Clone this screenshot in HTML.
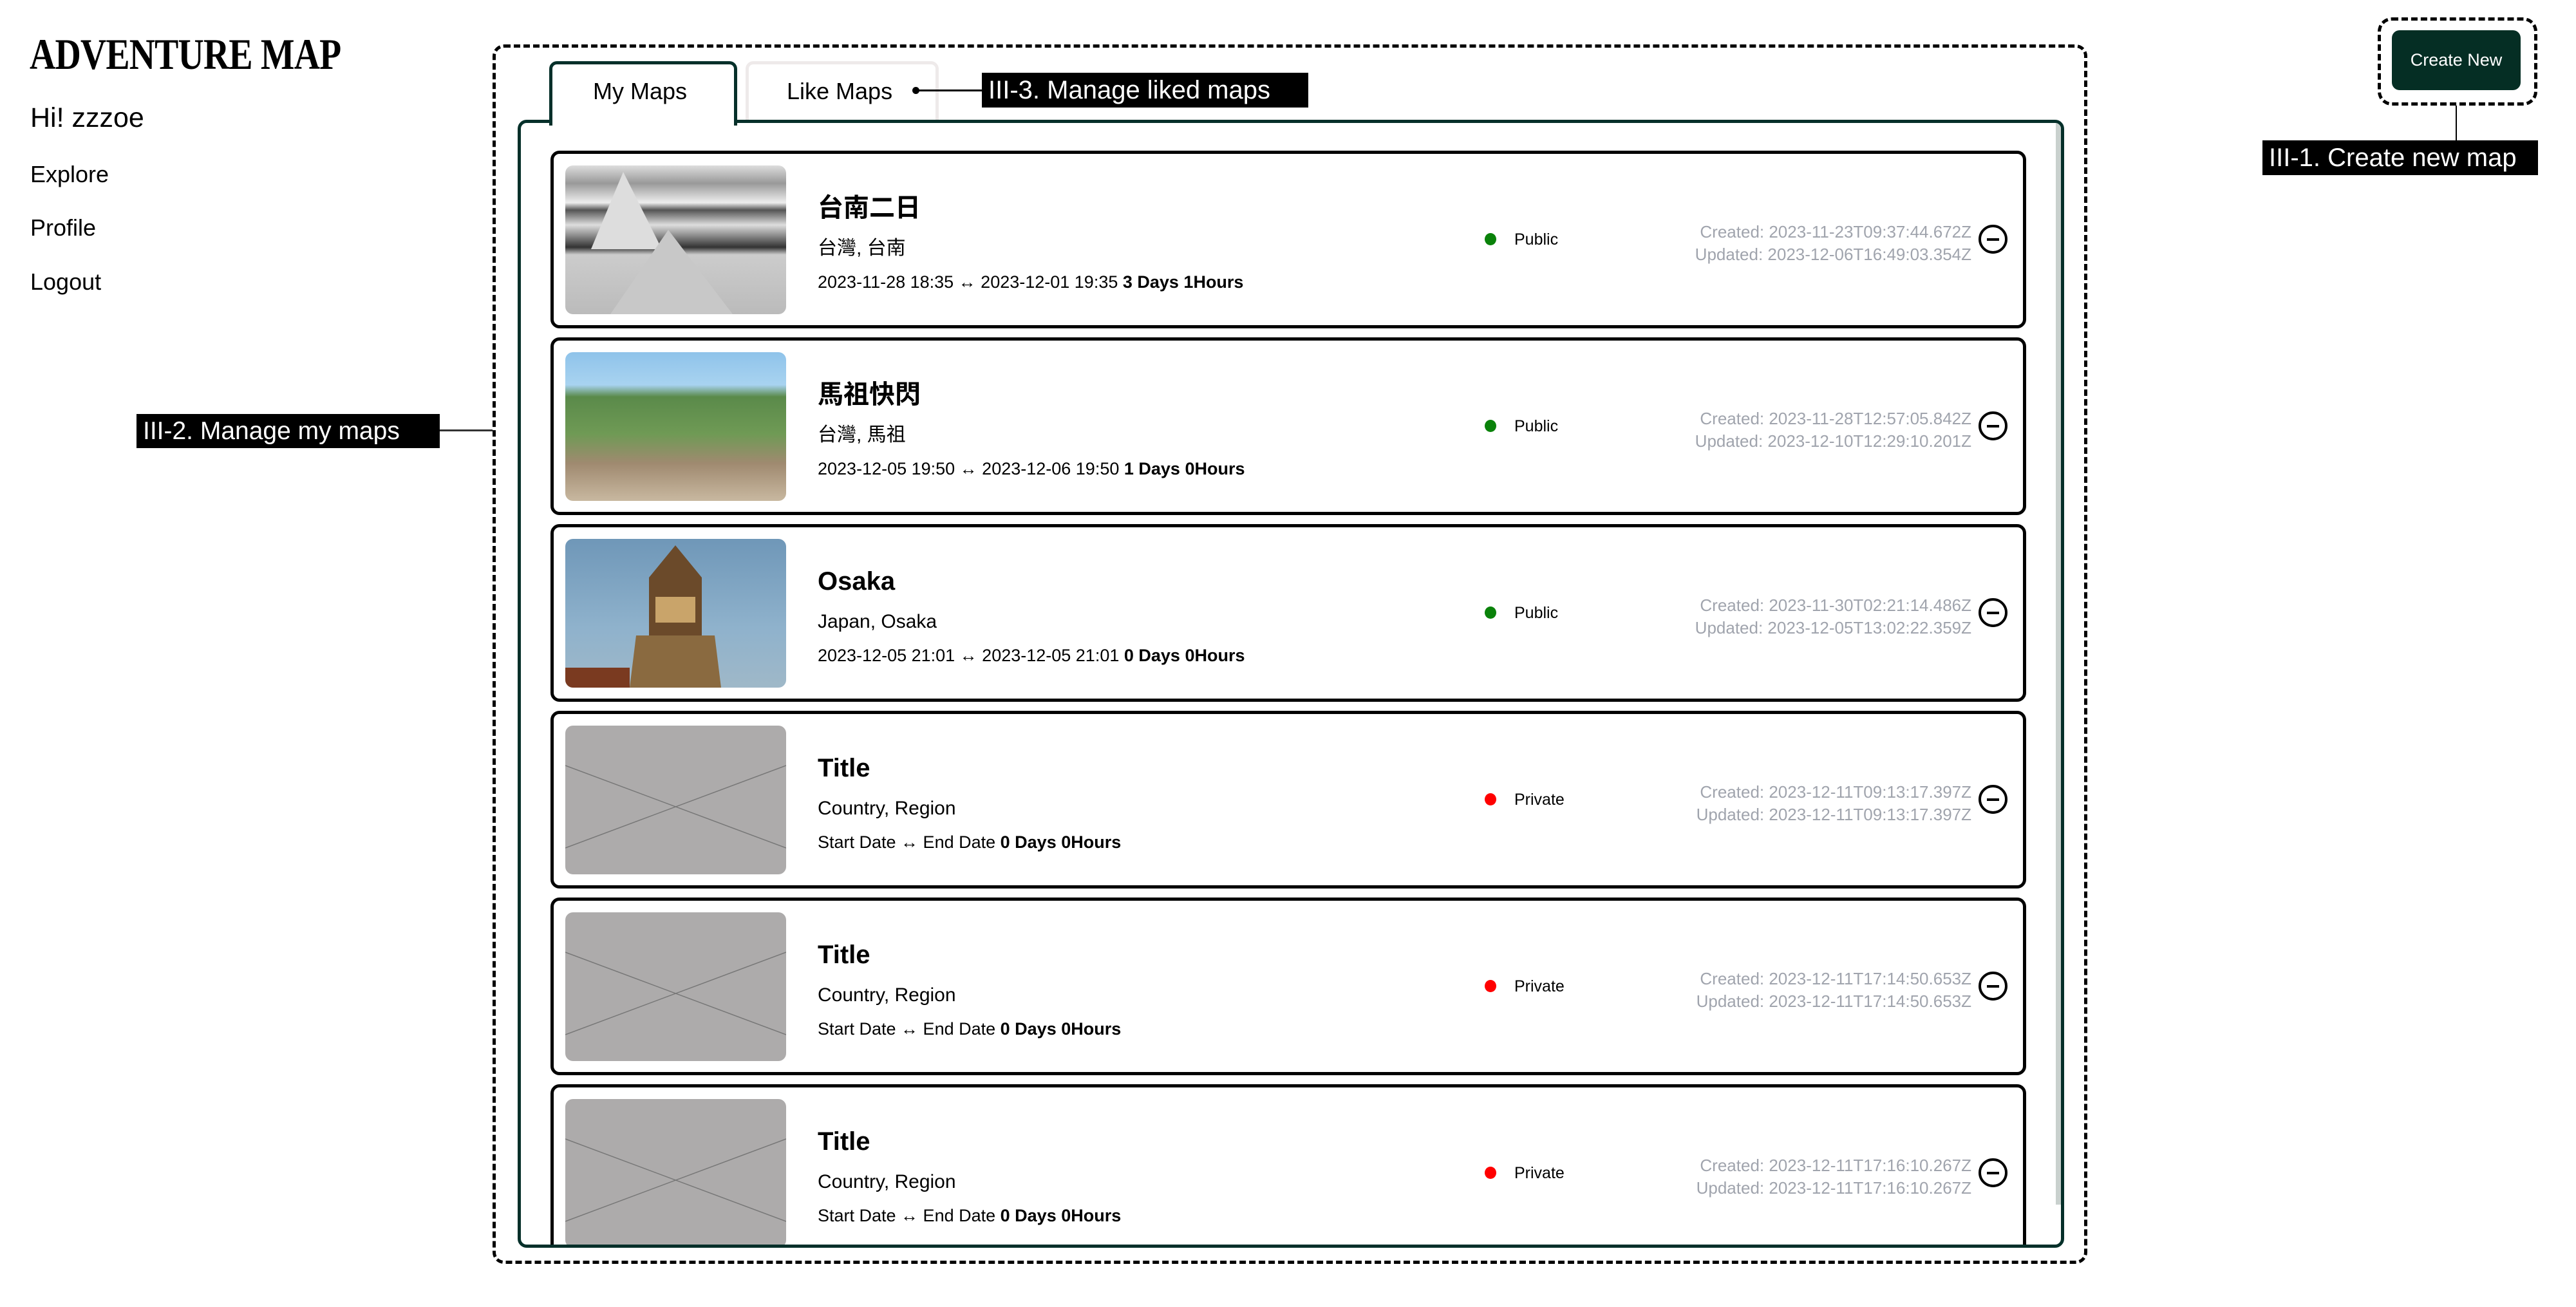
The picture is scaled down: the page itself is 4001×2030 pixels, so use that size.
<!DOCTYPE html>
<html><head><meta charset="utf-8"><style>
*{margin:0;padding:0;box-sizing:border-box}
body{width:4001px;height:2030px;background:#fff;position:relative;overflow:hidden;font-family:"Liberation Sans","Noto Sans CJK TC",sans-serif;color:#000}
.a{position:absolute;white-space:nowrap;line-height:1}
.logo{left:46px;top:50px;font-family:"Liberation Serif",serif;font-weight:bold;font-size:68px;transform:scaleX(.82);transform-origin:0 0;letter-spacing:-1px}
.nav{left:47px;font-size:36px}
.lbl{background:#000;color:#fff;font-size:39px;display:flex;align-items:center;padding-left:10px}
.card{position:absolute;left:855px;width:2292px;height:276px;border:5px solid #000;border-radius:14px;background:#fff}
.card .img{position:absolute;left:18px;top:18px;width:343px;height:231px;border-radius:12px;overflow:hidden}
.t{left:410px;top:64px;font-size:40px;font-weight:bold}
.loc{left:410px;top:132px;font-size:30px}
.dt{left:410px;top:186px;font-size:27px}
.dot{position:absolute;left:1446px;top:123px;width:18px;height:19px;border-radius:50%}
.pub{left:1492px;top:121px;font-size:25px}
.cr{right:80px;font-size:26px;color:#a0a4ad;text-align:right}
.minus{position:absolute;left:2213px;top:110px;width:45px;height:45px;border:4px solid #000;border-radius:50%}
.minus:after{content:"";position:absolute;left:9px;top:17px;width:19px;height:4px;background:#000}
</style></head><body>
<div class="a logo">ADVENTURE MAP</div>
<div class="a nav" style="top:162px;font-size:43px">Hi! zzzoe</div>
<div class="a nav" style="top:253px">Explore</div>
<div class="a nav" style="top:336px">Profile</div>
<div class="a nav" style="top:420px">Logout</div>

<div class="a lbl" style="left:212px;top:643px;width:471px;height:53px">III-2. Manage my maps</div>
<div class="a" style="left:683px;top:667px;width:82px;height:3px;background:#333"></div>

<div class="a" style="left:765px;top:69px;width:2477px;height:1894px;border:5px dashed #000;border-radius:18px"></div>

<div class="a" style="left:1158px;top:95px;width:300px;height:100px;border:5px solid #eeeaea;border-bottom:none;border-radius:12px 12px 0 0"></div>
<div class="a" style="left:1222px;top:124px;font-size:36px">Like Maps</div>
<div class="a" style="left:804px;top:186px;width:2402px;height:1752px;border:5px solid #06302a;border-radius:14px;overflow:hidden;background:#fff">
  <div style="position:absolute;right:0;top:0;width:8px;height:1680px;background:#c9d1ce"></div>
</div>
<div class="a" style="left:853px;top:95px;width:292px;height:100px;border:5px solid #06302a;border-bottom:none;border-radius:12px 12px 0 0;background:#fff"></div>
<div class="a" style="left:921px;top:124px;font-size:36px">My Maps</div>
<div class="a" style="left:1417px;top:135px;width:11px;height:11px;border-radius:50%;background:#000"></div>
<div class="a" style="left:1422px;top:139px;width:103px;height:3px;background:#000"></div>
<div class="a lbl" style="left:1525px;top:113px;width:507px;height:54px;font-size:40px">III-3. Manage liked maps</div>

<div class="a" style="left:809px;top:191px;width:2384px;height:1742px;overflow:hidden">
<div style="position:absolute;left:-809px;top:-195px;width:4001px;height:2030px">

<div class="card" style="top:238px">
 <div class="img" style="background:linear-gradient(180deg,#ddd 0%,#999 12%,#eee 25%,#555 30%,#ddd 40%,#333 55%,#ccc 60%,#bbb 100%)"><svg width="343" height="231"><polygon points="40,130 90,10 150,130" fill="#ddd"/><polygon points="70,231 160,100 260,231" fill="#c8c8c8"/></svg></div>
 <div class="a t">台南二日</div>
 <div class="a loc">台灣, 台南</div>
 <div class="a dt">2023-11-28 18:35 ↔ 2023-12-01 19:35 <b>3 Days 1Hours</b></div>
 <div class="dot" style="background:#0a820a"></div><div class="a pub">Public</div>
 <div class="a cr" style="top:108px">Created: 2023-11-23T09:37:44.672Z</div>
 <div class="a cr" style="top:143px">Updated: 2023-12-06T16:49:03.354Z</div>
 <div class="minus"></div>
</div>

<div class="card" style="top:528px">
 <div class="img" style="background:linear-gradient(180deg,#8fc3ea 0%,#a8d3f0 22%,#5a8a4a 30%,#6f9a55 55%,#a08a70 75%,#c8b8a0 100%)"></div>
 <div class="a t">馬祖快閃</div>
 <div class="a loc">台灣, 馬祖</div>
 <div class="a dt">2023-12-05 19:50 ↔ 2023-12-06 19:50 <b>1 Days 0Hours</b></div>
 <div class="dot" style="background:#0a820a"></div><div class="a pub">Public</div>
 <div class="a cr" style="top:108px">Created: 2023-11-28T12:57:05.842Z</div>
 <div class="a cr" style="top:143px">Updated: 2023-12-10T12:29:10.201Z</div>
 <div class="minus"></div>
</div>

<div class="card" style="top:818px">
 <div class="img" style="background:linear-gradient(180deg,#6f97b8 0%,#8fb2cc 60%,#9fb8c8 100%)"><svg width="343" height="231"><polygon points="130,231 130,60 171,10 212,60 212,231" fill="#6b4a2a"/><polygon points="100,231 110,150 232,150 242,231" fill="#8a6a40"/><rect x="140" y="90" width="62" height="40" fill="#c9a46a"/><rect x="0" y="200" width="100" height="31" fill="#7a3a20"/></svg></div>
 <div class="a t">Osaka</div>
 <div class="a loc">Japan, Osaka</div>
 <div class="a dt">2023-12-05 21:01 ↔ 2023-12-05 21:01 <b>0 Days 0Hours</b></div>
 <div class="dot" style="background:#0a820a"></div><div class="a pub">Public</div>
 <div class="a cr" style="top:108px">Created: 2023-11-30T02:21:14.486Z</div>
 <div class="a cr" style="top:143px">Updated: 2023-12-05T13:02:22.359Z</div>
 <div class="minus"></div>
</div>

<div class="card" style="top:1108px">
 <div class="img" style="background:#adabab"><svg width="343" height="231"><line x1="0" y1="62" x2="343" y2="190" stroke="#777" stroke-width="1.5"/><line x1="0" y1="190" x2="343" y2="62" stroke="#777" stroke-width="1.5"/></svg></div>
 <div class="a t">Title</div>
 <div class="a loc">Country, Region</div>
 <div class="a dt">Start Date ↔ End Date <b>0 Days 0Hours</b></div>
 <div class="dot" style="background:#f00"></div><div class="a pub">Private</div>
 <div class="a cr" style="top:108px">Created: 2023-12-11T09:13:17.397Z</div>
 <div class="a cr" style="top:143px">Updated: 2023-12-11T09:13:17.397Z</div>
 <div class="minus"></div>
</div>

<div class="card" style="top:1398px">
 <div class="img" style="background:#adabab"><svg width="343" height="231"><line x1="0" y1="62" x2="343" y2="190" stroke="#777" stroke-width="1.5"/><line x1="0" y1="190" x2="343" y2="62" stroke="#777" stroke-width="1.5"/></svg></div>
 <div class="a t">Title</div>
 <div class="a loc">Country, Region</div>
 <div class="a dt">Start Date ↔ End Date <b>0 Days 0Hours</b></div>
 <div class="dot" style="background:#f00"></div><div class="a pub">Private</div>
 <div class="a cr" style="top:108px">Created: 2023-12-11T17:14:50.653Z</div>
 <div class="a cr" style="top:143px">Updated: 2023-12-11T17:14:50.653Z</div>
 <div class="minus"></div>
</div>

<div class="card" style="top:1688px">
 <div class="img" style="background:#adabab"><svg width="343" height="231"><line x1="0" y1="62" x2="343" y2="190" stroke="#777" stroke-width="1.5"/><line x1="0" y1="190" x2="343" y2="62" stroke="#777" stroke-width="1.5"/></svg></div>
 <div class="a t">Title</div>
 <div class="a loc">Country, Region</div>
 <div class="a dt">Start Date ↔ End Date <b>0 Days 0Hours</b></div>
 <div class="dot" style="background:#f00"></div><div class="a pub">Private</div>
 <div class="a cr" style="top:108px">Created: 2023-12-11T17:16:10.267Z</div>
 <div class="a cr" style="top:143px">Updated: 2023-12-11T17:16:10.267Z</div>
 <div class="minus"></div>
</div>

</div></div>

<div class="a" style="left:3693px;top:27px;width:248px;height:137px;border:5px dashed #000;border-radius:22px"></div>
<div class="a" style="left:3715px;top:47px;width:200px;height:93px;background:#052e24;border-radius:12px;color:#fff;font-size:27px;display:flex;align-items:center;justify-content:center">Create New</div>
<div class="a" style="left:3814px;top:164px;width:2px;height:54px;background:#000"></div>
<div class="a lbl" style="left:3514px;top:218px;width:428px;height:54px;font-size:40px">III-1. Create new map</div>
</body></html>
